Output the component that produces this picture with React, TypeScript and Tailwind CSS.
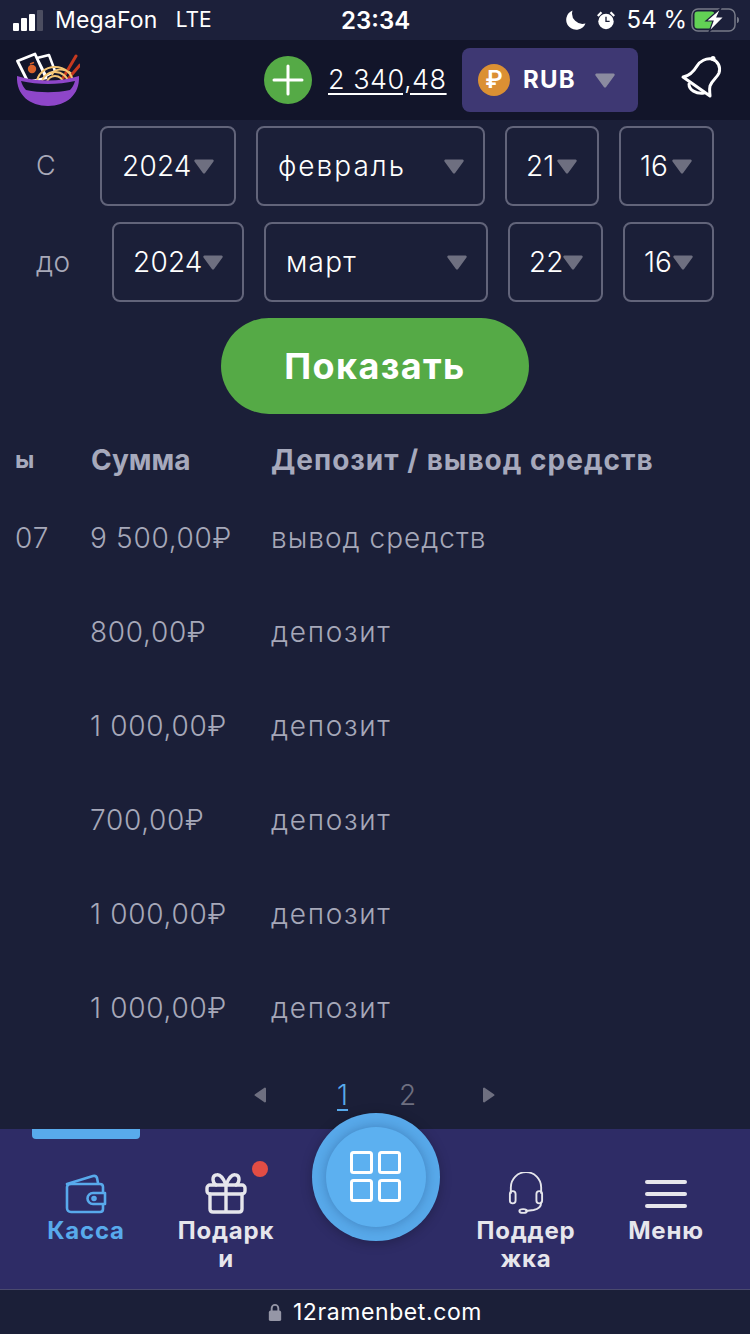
import React from "react";

const font = { fontFamily: '"Inter", "Noto Sans", sans-serif' };

function Caret({ className = "", color = "#6e6f80" }: { className?: string; color?: string }) {
  return (
    <svg viewBox="0 0 20 15" className={"w-[20px] h-[15px] shrink-0 " + className}>
      <path d="M1.500 0.500h17a1.200 1.200 0 0 1 1 1.900l-8.400 11.600a1.300 1.300 0 0 1-2.200 0L0.500 2.400a1.200 1.200 0 0 1 1-1.900z" fill={color} />
    </svg>
  );
}

function Select({ value, w, spread, pl, gap = "ml-[4px]", track = "tracking-[0px]" }: { value: string; w: string; spread?: boolean; pl: string; gap?: string; track?: string }) {
  return (
    <div className={`${w} ${pl} h-[80px] shrink-0 rounded-[8px] border-2 border-[#62647a] flex items-center ${spread ? "justify-between pr-[19px]" : ""} text-[28px] font-light text-white`}>
      <span className={track}>{value}</span>
      <Caret className={spread ? "" : gap} />
    </div>
  );
}

const rows = [
  ["07", "9 500,00₽", "вывод средств"],
  ["", "800,00₽", "депозит"],
  ["", "1 000,00₽", "депозит"],
  ["", "700,00₽", "депозит"],
  ["", "1 000,00₽", "депозит"],
  ["", "1 000,00₽", "депозит"],
];

function Logo() {
  return (
    <svg viewBox="0 0 64 56" className="w-[64px] h-[56px]">
      <path d="M1.500 10L19 3l11 24-18 4z" fill="#12152a" stroke="#fff" strokeWidth="2.800" strokeLinejoin="round" />
      <path d="M21 7l12-3 6 16-9 5z" fill="#12152a" stroke="#fff" strokeWidth="2.500" strokeLinejoin="round" />
      <circle cx="16" cy="18" r="4.200" fill="#d9622b" />
      <path d="M14 13l4-1.500" stroke="#d9622b" strokeWidth="1.500" />
      <path d="M36 24c2-6 10-8 20-1" fill="none" stroke="#f3c674" strokeWidth="2" />
      <path d="M47 27L60 5M52 28L64 14" stroke="#c6391f" strokeWidth="3" strokeLinecap="round" />
      <path d="M21 32a18 16 0 0 1 36 0" fill="none" stroke="#f3c674" strokeWidth="2" />
      <path d="M26 32a13 11 0 0 1 26 0" fill="none" stroke="#f3c674" strokeWidth="2" />
      <path d="M31 32a8 7 0 0 1 16 0" fill="none" stroke="#f3c674" strokeWidth="2" />
      <path d="M1 25c20 6 42 6 62 0 1 19-13 30-31 30S0 44 1 25z" fill="#8e46c9" />
      <path d="M5 30c17 4 37 4 54 0-1 4-3 7-5 9-14 3-30 3-44 0-2-2-4-5-5-9z" fill="#12152a" />
    </svg>
  );
}

function Wallet() {
  return (
    <svg viewBox="0 0 44 42" fill="none" stroke="#58aaec" strokeWidth="2.600" strokeLinejoin="round" strokeLinecap="round" className="w-[44px] h-[42px]">
      <path d="M3 12l26-8c2-.5 3.500.5 4 2l1 5" />
      <path d="M7 12h29c2 0 3 1 3 3v22c0 2-1 3-3 3H7c-2.500 0-4-1.500-4-4V15c0-1.500 1.500-3 4-3z" />
      <path d="M41 21H29a5 5 0 0 0 0 11h12z" fill="#2e2c66" />
      <circle cx="30" cy="26.500" r="1.500" />
    </svg>
  );
}

function Gift() {
  return (
    <svg viewBox="0 0 42 42" fill="none" stroke="#e6e6ec" strokeWidth="3.400" strokeLinejoin="round" strokeLinecap="round" className="w-[42px] h-[42px]">
      <rect x="2" y="13" width="38" height="9" rx="3" />
      <path d="M5 22v15c0 2 1 3 3 3h26c2 0 3-1 3-3V22M21 13v27" />
      <path d="M21 13c-3-8-7-11-10-10-4 1-4 7 0 10M21 13c3-8 7-11 10-10 4 1 4 7 0 10" />
    </svg>
  );
}

function Headset() {
  return (
    <svg viewBox="0 0 38 44" fill="none" stroke="#e6e6ec" strokeWidth="2" strokeLinecap="round" strokeLinejoin="round" className="w-[36px] h-[42px]">
      <path d="M3 22v-6a16 16 0 0 1 32 0v6" />
      <rect x="2" y="20" width="6" height="13" rx="3" />
      <rect x="30" y="20" width="6" height="13" rx="3" />
      <path d="M35 32c0 4-3 7-8 8l-8 1" />
      <ellipse cx="16" cy="41" rx="4" ry="2" />
    </svg>
  );
}

function Bell() {
  return (
    <svg viewBox="0 0 44 44" fill="none" stroke="#fff" strokeWidth="3" strokeLinejoin="round" strokeLinecap="round" className="w-[44px] h-[44px]">
      <path d="M3 21C10 20 14 15 17 10C20 5 26 2 32 3C38 5 41 11 39 17C37 22 32 24 30 30C29 34 30 37 30 40Z" />
      <path d="M9 28C9 34 16 38 24 37" />
      <circle cx="33" cy="2.500" r="1" fill="#fff" />
    </svg>
  );
}

function Signal() {
  return (
    <div className="flex items-end gap-[2px] h-[21px]">
      <span className="w-[6px] h-[8px] rounded-[1px] bg-white" />
      <span className="w-[6px] h-[13px] rounded-[1px] bg-white" />
      <span className="w-[6px] h-[17px] rounded-[1px] bg-white" />
      <span className="w-[6px] h-[21px] rounded-[1px] bg-[#4b4d60]" />
    </div>
  );
}

function Battery() {
  return (
    <svg viewBox="0 0 48 24" className="w-[48px] h-[24px]">
      <rect x="1" y="1" width="43" height="22" rx="6" fill="none" stroke="#777a88" strokeWidth="1.500" />
      <rect x="3.500" y="3.500" width="20" height="17" rx="3" fill="#62d155" />
      <path d="M46 9c1.500 0 2 1.500 2 3s-.5 3-2 3z" fill="#777a88" />
      <path d="M30 0L15 13h7L18 24l15-15h-7z" fill="#fff" stroke="#1c203a" strokeWidth="1.200" />
    </svg>
  );
}

function NavItem({ icon, label, active, w }: { icon: React.ReactNode; label: string; active?: boolean; w: string }) {
  return (
    <div className={`${w} flex flex-col items-center pt-[43px] shrink-0`}>
      <div className="h-[42px] flex items-end justify-center">{icon}</div>
      <div className={`mt-[3px] text-[24px] leading-[28px] font-bold text-center break-all tracking-[0.8px] px-[4px] w-[108px] ${active ? "text-[#58aaec]" : "text-[#e6e6ec]"}`}>{label}</div>
    </div>
  );
}

export default function App() {
  return (
    <div style={font} className="w-[750px] h-[1334px] bg-[#1b1f38] flex flex-col overflow-hidden">
      <div className="h-[40px] shrink-0 bg-[#1c203a] flex items-center justify-between pl-[13px] pr-[11px] text-white text-[24px] font-normal relative">
        <div className="flex items-center">
          <Signal />
          <span className="ml-[12px] text-[23px] tracking-[0.2px]">MegaFon</span>
          <span className="ml-[18px] text-[21px]">LTE</span>
        </div>
        <span className="absolute left-[341px] top-[3px] font-semibold">23:34</span>
        <div className="flex items-center">
          <svg viewBox="0 0 20 20" className="w-[20px] h-[20px]"><path d="M6.500 0.500a10 10 0 1 0 13 13A10.500 10.500 0 0 1 6.500 0.500z" fill="#fff" /></svg>
          <svg viewBox="0 0 22 22" className="ml-[10px] w-[20px] h-[21px]"><circle cx="11" cy="12" r="8.500" fill="#fff" /><path d="M2 6l4-4M20 6l-4-4" stroke="#fff" strokeWidth="2.500" /><path d="M11 7v5h4" stroke="#1c203a" strokeWidth="1.500" fill="none" /></svg>
          <span className="ml-[11px] mr-[4px]">54 %</span>
          <Battery />
        </div>
      </div>

      <div className="h-[80px] shrink-0 bg-[#12152a] flex items-center">
        <div className="ml-[16px] w-[64px] mt-[-2px]"><Logo /></div>
        <div className="ml-[184px] w-[48px] h-[48px] rounded-full bg-[#55aa46] flex items-center justify-center">
          <svg viewBox="0 0 32 32" className="w-[32px] h-[32px]"><path d="M2 16h28M16 2v28" stroke="#fff" strokeWidth="3" strokeLinecap="round" /></svg>
        </div>
        <span className="ml-[16px] text-[27px] font-light text-white underline underline-offset-[4px] tracking-[0.5px] w-[118px] whitespace-nowrap">2 340,48</span>
        <div className="ml-[16px] w-[176px] h-[64px] rounded-[8px] bg-[#3e3873] flex items-center pl-[16px]">
          <div className="w-[32px] h-[32px] rounded-full bg-[#db9033] flex items-center justify-center text-white text-[24px] font-semibold leading-none">₽</div>
          <span className="ml-[13px] text-[24px] font-bold text-white tracking-[1.200px]">RUB</span>
          <Caret className="ml-[19px]" color="#8b8ba0" />
        </div>
        <div className="ml-[42px] mt-[-4px]"><Bell /></div>
      </div>

      <div className="flex-1 min-h-0 flex flex-col relative">
        <div className="flex items-center mt-[6px] h-[80px]">
          <span className="ml-[36px] w-[64px] text-[27px] font-light text-[#a8a9b8]">С</span>
          <Select value="2024" w="w-[136px]" pl="pl-[20px]" gap="ml-[2px]" track="tracking-[0.200px]" />
          <div className="w-[20px]" />
          <Select value="февраль" w="w-[229px]" pl="pl-[20px]" spread track="tracking-[2px]" />
          <div className="w-[20px]" />
          <Select value="21" w="w-[94px]" pl="pl-[19px]" gap="ml-[3px]" />
          <div className="w-[20px]" />
          <Select value="16" w="w-[95px]" pl="pl-[19px]" gap="ml-[4px]" />
        </div>
        <div className="flex items-center mt-[16px] h-[80px]">
          <span className="ml-[36px] w-[76px] text-[28px] font-light text-[#a8a9b8] tracking-[0.500px]">до</span>
          <Select value="2024" w="w-[132px]" pl="pl-[19px]" gap="ml-[0px]" track="tracking-[0.200px]" />
          <div className="w-[20px]" />
          <Select value="март" w="w-[224px]" pl="pl-[20px]" spread track="tracking-[1.200px]" />
          <div className="w-[20px]" />
          <Select value="22" w="w-[95px]" pl="pl-[19px]" gap="ml-[0px]" />
          <div className="w-[20px]" />
          <Select value="16" w="w-[91px]" pl="pl-[19px]" gap="ml-[1px]" />
        </div>
        <div className="mt-[16px] mx-auto w-[308px] h-[96px] rounded-full bg-[#55aa46] flex items-center justify-center text-white font-bold text-[36px] tracking-[1.400px]">Показать</div>

        <div className="mt-[26px] flex items-center h-[40px] text-[28px] font-bold text-[#a6a9bc]">
          <span className="ml-[15px] w-[76px] text-[24px] tracking-[1px]">ы</span>
          <span className="w-[180px]">Сумма</span>
          <span className="whitespace-nowrap tracking-[1px]">Депозит / вывод средств</span>
        </div>
        <div className="mt-[11px] flex flex-col">
          {rows.map((r, i) => (
            <div key={i} className="h-[94px] flex items-center text-[28px] font-light text-[#a6a8b9]">
              <span className="ml-[15px] w-[75px] tracking-[1px]">{r[0]}</span>
              <span className="w-[181px] tracking-[0.700px] whitespace-nowrap">{r[1]}</span>
              <span className={i === 0 ? "tracking-[1px]" : "tracking-[1.700px]"}>{r[2]}</span>
            </div>
          ))}
        </div>
        <div className="mt-[20px] h-[40px] flex items-center pl-[254px]">
          <svg viewBox="0 0 13 16" className="w-[13px] h-[16px] shrink-0"><path d="M12 1.500v13a1 1 0 0 1-1.600.7L1 8.800a1 1 0 0 1 0-1.600l9.400-6.400A1 1 0 0 1 12 1.500z" fill="#6e6f80" /></svg>
          <span className="ml-[70px] w-[12px] text-[28px] font-light text-[#58aaec] underline underline-offset-[4px]">1</span>
          <span className="ml-[50px] w-[16px] text-[28px] font-light text-[#6e6f80]">2</span>
          <svg viewBox="0 0 13 16" className="ml-[67px] w-[13px] h-[16px] shrink-0"><path d="M1 1.500v13a1 1 0 0 0 1.600.7L12 8.800a1 1 0 0 0 0-1.600L2.600.8A1 1 0 0 0 1 1.500z" fill="#6e6f80" /></svg>
        </div>

        <div className="absolute left-[312px] top-[993px] w-[128px] h-[128px] rounded-full bg-[#58a9ea] flex items-center justify-center shadow-[0_2px_12px_rgba(0,0,0,0.25)] z-10">
          <div className="w-[100px] h-[100px] rounded-full bg-[#5cb0f0] shadow-[0_0_12px_rgba(30,70,120,0.4)] flex items-center justify-center">
            <svg viewBox="0 0 52 52" fill="none" stroke="#fff" strokeWidth="3" className="w-[52px] h-[52px]">
              <rect x="1.500" y="1.500" width="20" height="20" rx="2" /><rect x="29.500" y="1.500" width="20" height="20" rx="2" />
              <rect x="1.500" y="29.500" width="20" height="20" rx="2" /><rect x="29.500" y="29.500" width="20" height="20" rx="2" />
            </svg>
          </div>
        </div>
      </div>

      <div className="h-[161px] shrink-0 bg-[#2e2c66] relative flex border-b border-[#4a4a6e] overflow-hidden">
        <div className="absolute left-[32px] top-0 w-[108px] h-[10px] rounded-b-[4px] bg-[#58aaec]" />
        <div className="absolute left-[252px] top-[32px] w-[16px] h-[16px] rounded-full bg-[#e24d44]" />
        <NavItem w="w-[172px]" active label="Касса" icon={<Wallet />} />
        <NavItem w="w-[108px]" label="Подарки" icon={<Gift />} />
        <div className="w-[192px] shrink-0" />
        <NavItem w="w-[108px]" label="Поддержка" icon={<Headset />} />
        <NavItem w="w-[172px]" label="Меню" icon={
          <div className="flex flex-col gap-[8px] pb-[6px]">
            <span className="block w-[42px] h-[4px] rounded-full bg-[#e6e6ec]" />
            <span className="block w-[42px] h-[4px] rounded-full bg-[#e6e6ec]" />
            <span className="block w-[42px] h-[4px] rounded-full bg-[#e6e6ec]" />
          </div>
        } />
      </div>

      <div className="h-[44px] shrink-0 bg-[#1b1f38] flex items-center justify-center gap-[11px] text-white text-[23px] font-normal tracking-[0.600px]">
        <svg viewBox="0 0 14 20" className="w-[14px] h-[19px]"><path d="M3.500 9V5.500a3.500 3.500 0 0 1 7 0V9" fill="none" stroke="#9596a6" strokeWidth="2" /><rect x="0.500" y="8" width="13" height="11" rx="2" fill="#9596a6" /></svg>
        <span>12ramenbet.com</span>
      </div>
    </div>
  );
}
